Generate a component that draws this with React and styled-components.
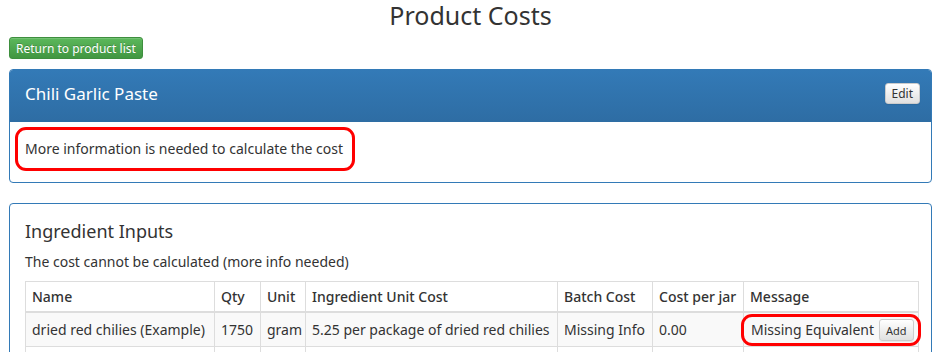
import React from "react";
import styled, { createGlobalStyle } from "styled-components";

const GlobalStyle = createGlobalStyle`
  body {
    margin: 0;
    background: #fff;
    color: #333;
    font-family: "Noto Sans", "Open Sans", sans-serif;
    font-size: 14px;
    line-height: 20px;
  }
  * { box-sizing: border-box; }
`;

const rows = [
  {
    name: "dried red chilies (Example)",
    qty: "1750",
    unit: "gram",
    unitCost: "5.25 per package of dried red chilies",
    batch: "Missing Info",
    perJar: "0.00",
    message: "Missing Equivalent",
    flagged: true,
  },
  {
    name: "garlic (Example)",
    qty: "500",
    unit: "gram",
    unitCost: "2.00 per pound of garlic",
    batch: "1.10",
    perJar: "0.05",
    message: "",
  },
];

const columns = [
  { label: "Name", width: 189 },
  { label: "Qty", width: 46 },
  { label: "Unit", width: 45 },
  { label: "Ingredient Unit Cost", width: 252 },
  { label: "Batch Cost", width: 95 },
  { label: "Cost per jar", width: 91 },
  { label: "Message", width: 175 },
];

function App() {
  return (
    <>
      <GlobalStyle />
      <Page>
        <Title>Product Costs</Title>
        <SuccessButton>Return to product list</SuccessButton>

        <Panel>
          <PanelHeading>
            <PanelTitle>Chili Garlic Paste</PanelTitle>
            <SmallButton>Edit</SmallButton>
          </PanelHeading>
          <PanelBody $tight>
            <Highlight>More information is needed to calculate the cost</Highlight>
          </PanelBody>
        </Panel>

        <Panel>
          <PanelBody>
            <SectionTitle>Ingredient Inputs</SectionTitle>
            <Note>The cost cannot be calculated (more info needed)</Note>
            <Table>
              <colgroup>
                {columns.map((c) => (
                  <col key={c.label} style={{ width: c.width }} />
                ))}
              </colgroup>
              <thead>
                <tr>
                  {columns.map((c) => (
                    <Th key={c.label}>{c.label}</Th>
                  ))}
                </tr>
              </thead>
              <tbody>
                {rows.map((r, i) => (
                  <Row key={r.name} $striped={i % 2 === 0}>
                    <Td>{r.name}</Td>
                    <Td>{r.qty}</Td>
                    <Td>{r.unit}</Td>
                    <Td>{r.unitCost}</Td>
                    <Td>{r.batch}</Td>
                    <Td>{r.perJar}</Td>
                    <Td>
                      {r.flagged ? (
                        <CellHighlight>
                          {r.message}
                          <SmallButton $tiny>Add</SmallButton>
                        </CellHighlight>
                      ) : (
                        r.message
                      )}
                    </Td>
                  </Row>
                ))}
              </tbody>
            </Table>
          </PanelBody>
        </Panel>
      </Page>
    </>
  );
}

const Page = styled.div`
  padding: 0 8px 0 9px;
`;

const Title = styled.h1`
  margin: 0;
  padding-top: 1px;
  text-align: center;
  font-size: 25px;
  font-weight: 400;
  line-height: 29px;
  color: #333;
`;

const SuccessButton = styled.button`
  display: block;
  margin: 7px 0 10px;
  height: 22px;
  padding: 0 6px;
  font-family: inherit;
  font-size: 12px;
  color: #fff;
  background: linear-gradient(to bottom, #5cb85c 0%, #419641 100%);
  border: 1px solid #3e8f3e;
  border-radius: 3px;
  box-shadow: inset 0 1px 0 rgba(255, 255, 255, 0.15);
  text-shadow: 0 -1px 0 rgba(0, 0, 0, 0.2);
`;

const Panel = styled.div`
  border: 1px solid #337ab7;
  border-radius: 4px;
  margin-bottom: 20px;
  background: #fff;
  overflow: hidden;
`;

const PanelHeading = styled.div`
  display: flex;
  align-items: center;
  justify-content: space-between;
  height: 52px;
  padding: 0 13px 4px 15px;
  background: linear-gradient(to bottom, #337ab7 0%, #2e6da4 100%);
  border-bottom: 1px solid #2e6da4;
`;

const PanelTitle = styled.h3`
  margin: 0;
  font-size: 17px;
  font-weight: 400;
  color: #fff;
`;

const PanelBody = styled.div`
  padding: ${(p) => (p.$tight ? "5px 5px 11px" : "17px 15px 15px")};
`;

const Highlight = styled.span`
  display: inline-block;
  padding: 9px 9px 9px 7px;
  border: 3px solid #f00;
  border-radius: 11px;
  line-height: 20px;
`;

const SectionTitle = styled.h3`
  margin: 0 0 11px;
  font-size: 18px;
  font-weight: 400;
  line-height: 20px;
`;

const Note = styled.p`
  margin: 0 0 9px;
`;

const Table = styled.table`
  width: 100%;
  table-layout: fixed;
  border-collapse: collapse;
  border: 1px solid #ddd;
`;

const Th = styled.th`
  padding: 5px 5px 4px 6px;
  text-align: left;
  font-weight: 500;
  border: 1px solid #ddd;
  border-bottom-width: 2px;
  white-space: nowrap;
`;

const Row = styled.tr`
  background: ${(p) => (p.$striped ? "#f9f9f9" : "#fff")};
`;

const Td = styled.td`
  padding: 6px 5px 5px 6px;
  border: 1px solid #ddd;
  white-space: nowrap;
  vertical-align: middle;
`;

const CellHighlight = styled.span`
  display: inline-flex;
  align-items: center;
  gap: 5px;
  margin: -5px -9px -5px -9px;
  padding: 2px 6px 2px 7px;
  border: 3px solid #f00;
  border-radius: 11px;
`;

const SmallButton = styled.button`
  height: ${(p) => (p.$tiny ? "22px" : "21px")};
  padding: 0 ${(p) => (p.$tiny ? "6px" : "6px")};
  margin-right: ${(p) => (p.$tiny ? "-2px" : "-2px")};
  font-family: inherit;
  font-size: ${(p) => (p.$tiny ? "11px" : "12px")};
  color: #333;
  background: linear-gradient(to bottom, #fff 0%, #e0e0e0 100%);
  border: 1px solid #ccc;
  border-radius: 3px;
  box-shadow: inset 0 1px 0 rgba(255, 255, 255, 0.15), 0 1px 1px rgba(0, 0, 0, 0.075);
`;

export default App;
